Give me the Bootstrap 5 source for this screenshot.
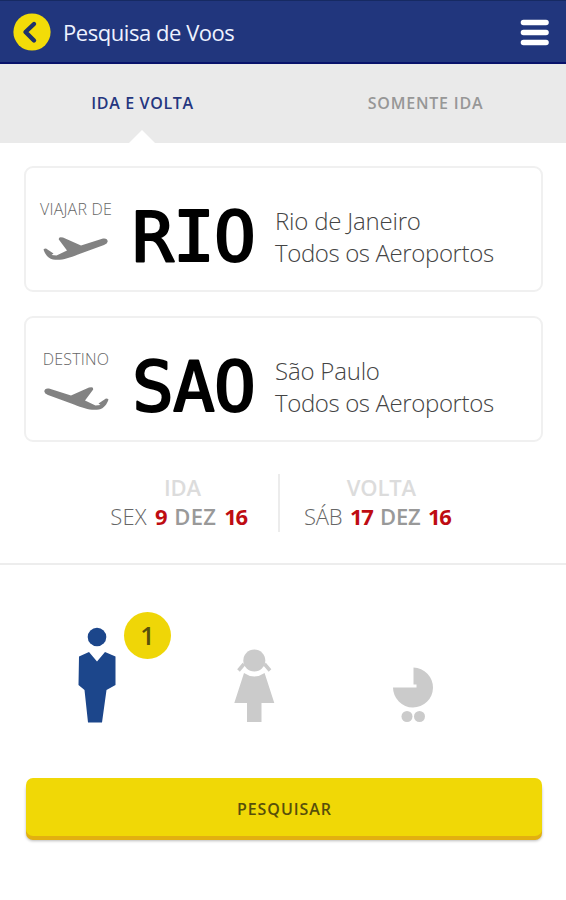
<!DOCTYPE html>
<html lang="pt-BR">
<head>
<meta charset="utf-8">
<meta name="viewport" content="width=device-width, initial-scale=1">
<title>Pesquisa de Voos</title>
<link href="https://cdn.jsdelivr.net/npm/bootstrap@5.3.0/dist/css/bootstrap.min.css" rel="stylesheet">
<style>
body{font-family:"Open Sans","Noto Sans",sans-serif;color:#666;background:#fff;min-height:100vh}
svg{display:block;flex:none}
.topbar{height:64px;background:#21367d;border-top:1px solid #162a62;border-bottom:2px solid #08126b;padding:1px 16px 0 13px}
.topbar h1{font-size:22px;color:#eef2ff;margin:-1px 0 0 12px;line-height:30px;letter-spacing:-.45px;font-weight:500}
.trip-tabs{height:79px;background:#eaeaea}
.trip-tabs .nav-link{height:79px;line-height:79px;padding:0 0 0 2px;font-size:16px;font-weight:600;color:#979797;border-radius:0;position:relative;letter-spacing:.8px}
.trip-tabs .nav-link.active{color:#25367f;background:none;letter-spacing:.65px}
.trip-tabs .nav-link.active::after{content:"";position:absolute;left:50%;bottom:0;margin-left:-13px;border:13px solid transparent;border-top:0;border-bottom-color:#fff}
.places{padding:23px 23px 0 24px}
.place{height:126px;border:2px solid #f0f0f0;border-radius:9px}
.place-kind{width:76px;margin-left:12px;font-size:16px;font-weight:300;line-height:22px;color:#666;white-space:nowrap;letter-spacing:.2px;padding-top:2px}
.place-kind svg{margin-top:15px}
.iata text{font-family:"DejaVu Sans Mono",monospace;font-size:69.5px;letter-spacing:-.8px;fill:#000;stroke:#000;stroke-width:2.2px;stroke-linejoin:round}
.place-name{font-size:24px;font-weight:300;line-height:32.5px;color:#444;white-space:nowrap;padding-top:16px;margin-left:15px;letter-spacing:-.2px}
.place-name .t{letter-spacing:-.38px}
.dates{height:123px;border-bottom:2px solid #ededed;padding:32px 0 0 110px}
.date-col{font-size:22px;line-height:29px;white-space:nowrap;font-weight:300;margin-top:-1px}
.date-col .date-label{font-weight:600;color:#dcdcdc;padding-left:8px;letter-spacing:-.2px}
.date-col b{color:#be0c12;font-weight:700;letter-spacing:-1.3px;margin-left:2px}
.date-col i{font-style:normal;font-weight:600;color:#999;margin-left:2px}
.d1{letter-spacing:.3px}
.d2{letter-spacing:-.2px}
.split{width:2px;height:58px;background:#ececec;margin:0 24px 0 31px}
.date-cell{width:137px}
.travellers{height:213px}
.count{left:124px;top:47px;width:47px;height:47px;background:#efd607;color:#57510a;font-size:25px;font-weight:600}
.btn-search{height:58px;background:#f0d806;color:#574f0a;border:0;border-radius:7px;box-shadow:0 4px 0 #e2b010,0 5px 3px #bbb;font-size:16px;font-weight:600;letter-spacing:.95px;padding:9px 0 6px 1px}
.search-area{padding:0 24px 0 26px}
</style>
</head>
<body>
<header class="topbar d-flex align-items-center">
  <svg width="38" height="38" viewBox="0 0 38 38"><circle cx="19" cy="19" r="18.600" fill="#f2dc08"/><path d="M21 11 12.500 19l8.500 8.500" fill="none" stroke="#1d326b" stroke-width="4.400" stroke-linecap="round" stroke-linejoin="round"/></svg>
  <h1>Pesquisa de Voos</h1>
  <svg class="ms-auto" width="30" height="28" viewBox="0 0 30 28"><path d="M3.500 4.500h22.500M3.500 14.500h22.500M3.500 24.500h22.500" stroke="#fff" stroke-width="5.600" stroke-linecap="round"/></svg>
</header>
<nav class="trip-tabs nav nav-justified">
  <a class="nav-link active">IDA E VOLTA</a>
  <a class="nav-link">SOMENTE IDA</a>
</nav>
<main>
  <section class="places d-grid gap-4">
    <div class="place d-flex align-items-center">
      <div class="place-kind d-flex flex-column align-items-center">
        <span>VIAJAR DE</span>
        <svg width="68" height="28" viewBox="0 0 68 28"><path d="M1.500 14.500q2-1.800 4 0l6 4-2 1.500 5 .5 10.500-5L16.800 4.500Q16.500 2.300 18.500 2.200L21 2.400 39 10.500 61 3.600Q65.500 3 65.700 6.500 65.500 8.500 62 10L36 19.500C26 23.500 20 25.500 11 24.500 6 23.500 3 19 1.500 14.500z" fill="#828282"/></svg>
      </div>
      <svg class="iata ms-3" width="130" height="100" viewBox="0 0 130 100"><text x="2" y="82">RIO</text></svg>
      <div class="place-name"><div>Rio de Janeiro</div><div class="t">Todos os Aeroportos</div></div>
    </div>
    <div class="place d-flex align-items-center">
      <div class="place-kind d-flex flex-column align-items-center">
        <span>DESTINO</span>
        <svg width="68" height="28" viewBox="0 0 68 28"><g transform="matrix(-1 0 0 1 68 0)"><path d="M1.500 14.500q2-1.800 4 0l6 4-2 1.500 5 .5 10.500-5L16.800 4.500Q16.500 2.300 18.500 2.200L21 2.400 39 10.500 61 3.600Q65.500 3 65.700 6.500 65.500 8.500 62 10L36 19.500C26 23.500 20 25.500 11 24.500 6 23.500 3 19 1.500 14.500z" fill="#828282"/></g></svg>
      </div>
      <svg class="iata ms-3" width="130" height="100" viewBox="0 0 130 100"><text x="2" y="82">SAO</text></svg>
      <div class="place-name"><div>São Paulo</div><div class="t">Todos os Aeroportos</div></div>
    </div>
  </section>
  <section class="dates d-flex">
    <div class="date-col date-cell text-center"><div class="date-label">IDA</div><div class="d1">SEX <b>9</b> <i>DEZ</i> <b>16</b></div></div>
    <div class="split"></div>
    <div class="date-col text-center"><div class="date-label">VOLTA</div><div class="d2">SÁB <b>17</b> <i>DEZ</i> <b>16</b></div></div>
  </section>
  <section class="travellers position-relative d-flex align-items-end">
    <svg width="566" height="158" viewBox="0 619 566 158">
      <g fill="#1c468b"><circle cx="97" cy="636" r="9.300"/><path d="M79 655.500 89 651l8 9.500 8-9.500 10.500 4.500V684l-9 5-4.500 32.500H88L84.500 689l-6-5z"/></g>
      <g fill="#cbcbcb"><circle cx="254.300" cy="659.500" r="11"/><path d="m244 663-5.500 6.500M264.500 663l5.500 6.500" stroke="#cbcbcb" stroke-width="3.500"/><path d="M244 672q10.300 7 20.600 0L274.300 702H261.500v19H247V702H234.300z"/>
      <path d="M413.500 666.500a20 20 0 1 1-20.500 20h23.500v-3h-3z"/><circle cx="407" cy="715.500" r="5.500"/><circle cx="419.500" cy="715.500" r="5.500"/></g>
    </svg>
    <span class="count position-absolute rounded-circle d-flex align-items-center justify-content-center">1</span>
  </section>
  <div class="search-area"><button class="btn btn-search w-100">PESQUISAR</button></div>
</main>
<script src="https://cdn.jsdelivr.net/npm/bootstrap@5.3.0/dist/js/bootstrap.bundle.min.js"></script>
</body>
</html>
